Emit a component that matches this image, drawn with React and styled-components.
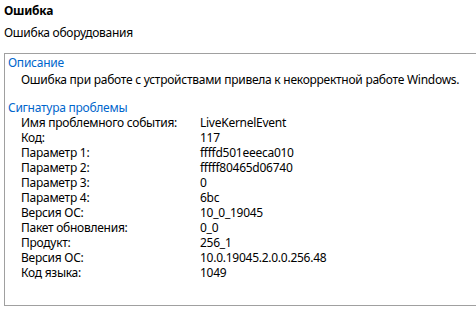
import { Fragment } from "react";
import styled, { createGlobalStyle } from "styled-components";

const GlobalStyle = createGlobalStyle`
  html, body {
    margin: 0;
    padding: 0;
    background: #ffffff;
  }
  body {
    font-family: "Noto Sans", "Open Sans", sans-serif;
    font-size: 12px;
    letter-spacing: -0.26px;
    color: #000000;
  }
`;

const Page = styled.div`
  width: 476px;
  height: 318px;
  overflow: hidden;
  padding: 3px 0 0 4px;
  box-sizing: border-box;
`;

const Title = styled.div`
  font-weight: 700;
  line-height: 16px;
  height: 16px;
`;

const Subtitle = styled.div`
  line-height: 16px;
  margin-top: 6px;
`;

const Panel = styled.div`
  margin-top: 12px;
  width: 490px;
  height: 253px;
  box-sizing: border-box;
  border: 1px solid #a0a0a0;
  padding: 1px 0 0 3px;
`;

const SectionHead = styled.div`
  color: #0066cc;
  line-height: 15px;
  margin-top: ${({ $gap }) => $gap || 0}px;
`;

const Description = styled.div`
  padding-left: 13px;
  line-height: 15px;
  margin-top: 2px;
`;

const Rows = styled.div`
  display: grid;
  grid-template-columns: 179px 1fr;
  padding-left: 13px;
`;

const Cell = styled.div`
  line-height: 15px;
  white-space: nowrap;
`;

const rows = [
  ["Имя проблемного события:", "LiveKernelEvent"],
  ["Код:", "117"],
  ["Параметр 1:", "ffffd501eeeca010"],
  ["Параметр 2:", "fffff80465d06740"],
  ["Параметр 3:", "0"],
  ["Параметр 4:", "6bc"],
  ["Версия ОС:", "10_0_19045"],
  ["Пакет обновления:", "0_0"],
  ["Продукт:", "256_1"],
  ["Версия ОС:", "10.0.19045.2.0.0.256.48"],
  ["Код языка:", "1049"],
];

export default function App() {
  return (
    <>
      <GlobalStyle />
      <Page>
        <Title>Ошибка</Title>
        <Subtitle>Ошибка оборудования</Subtitle>
        <Panel>
          <SectionHead>Описание</SectionHead>
          <Description>
            Ошибка при работе с устройствами привела к некорректной работе Windows.
          </Description>
          <SectionHead $gap={13}>Сигнатура проблемы</SectionHead>
          <Rows>
            {rows.map(([label, value], i) => (
              <Fragment key={i}>
                <Cell>{label}</Cell>
                <Cell>{value}</Cell>
              </Fragment>
            ))}
          </Rows>
        </Panel>
      </Page>
    </>
  );
}
